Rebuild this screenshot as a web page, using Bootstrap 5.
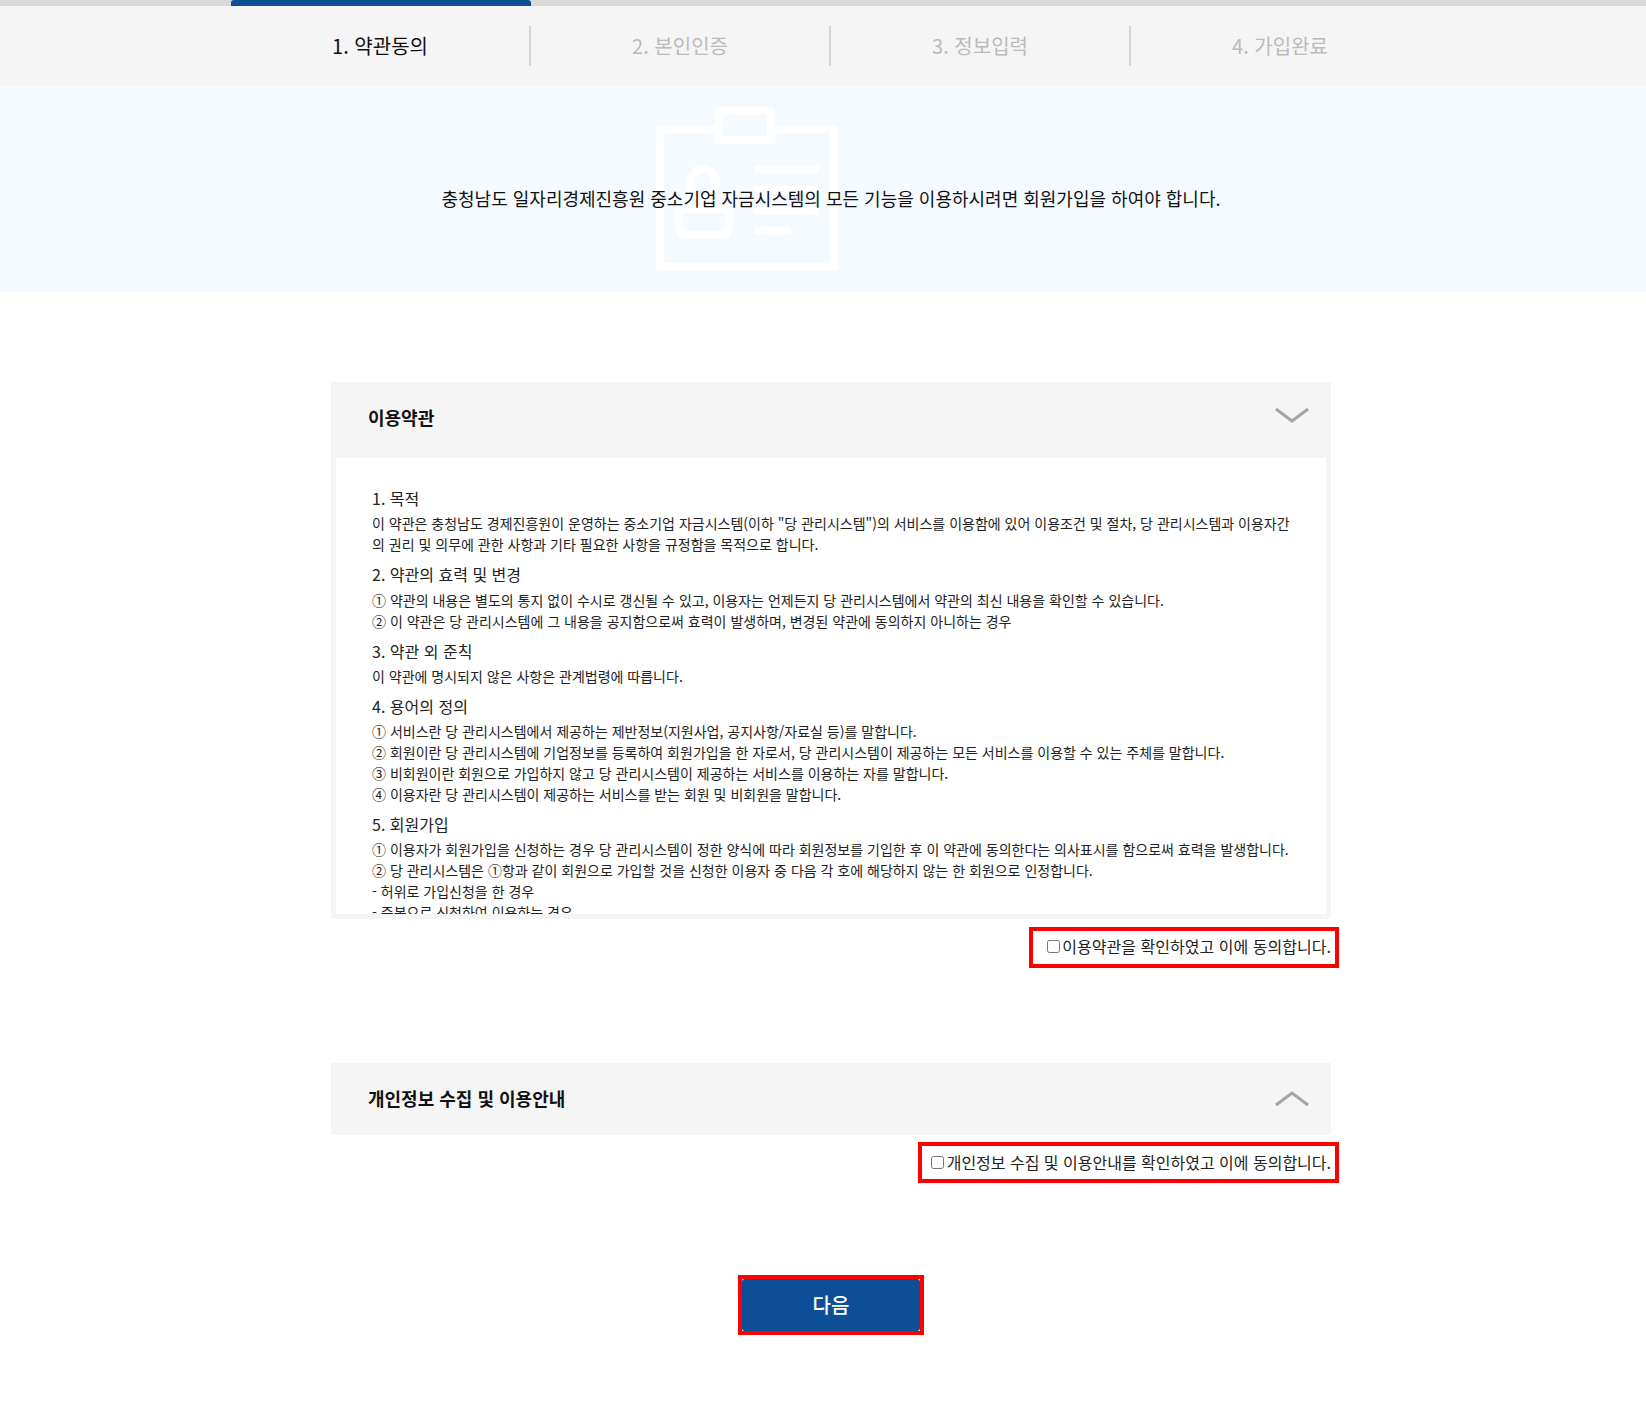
<!DOCTYPE html>
<html lang="ko">
<head>
<meta charset="utf-8">
<title>회원가입</title>
<link href="https://cdn.jsdelivr.net/npm/bootstrap@5.3.0/dist/css/bootstrap.min.css" rel="stylesheet">
<style>
html,body{overflow-x:hidden}
body{font-family:"Noto Sans CJK KR","Liberation Sans",sans-serif;color:#111;background:#fff;min-height:1422px}
.step-rail{height:86px;background:#f5f5f5;border-top:6px solid #d9d9d9;padding-left:12px;position:relative}
.step-fill{position:absolute;top:-6px;left:231px;width:300px;height:6px;background:#0d4f97;border-radius:3px 3px 0 0}
.step-list{width:1200px;height:100%;margin-left:auto;margin-right:auto;list-style:none;padding:20px 0;margin-top:0;margin-bottom:0}
.step-item{width:300px;height:40px;font-size:20px;line-height:40px;text-align:center;color:#bbb;border-left:2px solid #d5d5d5}
.step-item:first-child{border-left:0;color:#111;padding-left:2px}
.intro{height:206px;background:#f5faff;padding-left:16px;padding-top:19px;position:relative;font-size:18px}
.intro-art{position:absolute;left:650px;top:14px}
.intro-text{position:relative}
.agree-wrap{width:1000px;margin-left:calc(50% - 492px)}
.first-term{margin-top:90px}
.second-term{margin-top:95px}
.term-head{background:#f5f5f5;padding:0 22px 0 37px;font-weight:700;font-size:18px}
.term-h1{height:76px;padding-bottom:6px}
.term-h1 svg{margin-bottom:2px}
.term-h2{height:72px;padding-bottom:2px}
.term-frame{background:#f5f5f5;padding:0 5px 5px}
.term-body{background:#fff;height:456px;overflow:hidden;padding:29px 36px 0;font-size:14px;line-height:21px;color:#222;white-space:nowrap}
.term-body h6{font-size:16px;font-weight:400;line-height:22px;margin:0 0 4.3px}
.term-body p{margin:0 0 8px}
.agree-line{margin:8px -8px 0 0}
.agree-line-tight{margin-top:7px}
.agree-box{height:41px;border:4px solid #f00;padding:0 4px 4px 14px;font-size:16px;letter-spacing:.03px;color:#222}
.agree-box-wide{padding:0 4px 2px 9px;letter-spacing:-.01px}
.agree-box input{width:13px;height:13px;margin:2px 2px 0 0}
.agree-box-wide input{margin-right:3px}
.next-frame{width:186px;height:60px;margin-left:calc(50% - 93px);margin-top:92px;border:4px solid #f00;background:#fff}
.next-btn{width:100%;height:100%;background:#0d4f97;color:#fff;border:0;border-radius:3px;font-size:20px;font-weight:500;padding:0}
.next-btn:hover{background:#0d4f97;color:#fff}
</style>
</head>
<body>
<div class="step-rail">
  <div class="step-fill"></div>
  <ol class="step-list d-flex">
    <li class="step-item">1. 약관동의</li>
    <li class="step-item">2. 본인인증</li>
    <li class="step-item">3. 정보입력</li>
    <li class="step-item">4. 가입완료</li>
  </ol>
</div>
<div class="intro d-flex align-items-center justify-content-center">
  <svg class="intro-art" width="195" height="175" viewBox="0 0 195 175" fill="none" stroke="#fff" stroke-width="8" stroke-linejoin="round" aria-hidden="true">
    <path d="M68 29H10V167H184V29H121"/>
    <rect x="68.5" y="11" width="52.5" height="29"/>
    <ellipse cx="53" cy="84" rx="12.5" ry="15"/>
    <path d="M32 135L28 118Q26 109 36 109H72Q82 109 80 118L76 135Z"/>
    <path d="M108 69h57M108 90h57M108 111h57M108 131h29" stroke-linecap="round"/>
  </svg>
  <div class="intro-text">충청남도 일자리경제진흥원 중소기업 자금시스템의 모든 기능을 이용하시려면 회원가입을 하여야 합니다.</div>
</div>
<main class="agree-wrap">
  <section class="first-term">
    <div class="term-head term-h1 d-flex align-items-center justify-content-between">
      <span>이용약관</span>
      <svg width="34" height="18" viewBox="0 0 34 18" fill="none" stroke="#a5a5a5" stroke-width="3"><path d="M1 2l16 12L33 2"/></svg>
    </div>
    <div class="term-frame">
      <div class="term-body">
        <h6>1. 목적</h6>
        <p>이 약관은 충청남도 경제진흥원이 운영하는 중소기업 자금시스템(이하 "당 관리시스템")의 서비스를 이용함에 있어 이용조건 및 절차, 당 관리시스템과 이용자간<br>의 권리 및 의무에 관한 사항과 기타 필요한 사항을 규정함을 목적으로 합니다.</p>
        <h6>2. 약관의 효력 및 변경</h6>
        <p>① 약관의 내용은 별도의 통지 없이 수시로 갱신될 수 있고, 이용자는 언제든지 당 관리시스템에서 약관의 최신 내용을 확인할 수 있습니다.<br>② 이 약관은 당 관리시스템에 그 내용을 공지함으로써 효력이 발생하며, 변경된 약관에 동의하지 아니하는 경우</p>
        <h6>3. 약관 외 준칙</h6>
        <p>이 약관에 명시되지 않은 사항은 관계법령에 따릅니다.</p>
        <h6>4. 용어의 정의</h6>
        <p>① 서비스란 당 관리시스템에서 제공하는 제반정보(지원사업, 공지사항/자료실 등)를 말합니다.<br>② 회원이란 당 관리시스템에 기업정보를 등록하여 회원가입을 한 자로서, 당 관리시스템이 제공하는 모든 서비스를 이용할 수 있는 주체를 말합니다.<br>③ 비회원이란 회원으로 가입하지 않고 당 관리시스템이 제공하는 서비스를 이용하는 자를 말합니다.<br>④ 이용자란 당 관리시스템이 제공하는 서비스를 받는 회원 및 비회원을 말합니다.</p>
        <h6>5. 회원가입</h6>
        <p>① 이용자가 회원가입을 신청하는 경우 당 관리시스템이 정한 양식에 따라 회원정보를 기입한 후 이 약관에 동의한다는 의사표시를 함으로써 효력을 발생합니다.<br>② 당 관리시스템은 ①항과 같이 회원으로 가입할 것을 신청한 이용자 중 다음 각 호에 해당하지 않는 한 회원으로 인정합니다.<br>- 허위로 가입신청을 한 경우<br>- 중복으로 신청하여 이용하는 경우</p>
      </div>
    </div>
    <div class="agree-line d-flex justify-content-end">
      <label class="agree-box d-inline-flex align-items-center"><input type="checkbox">이용약관을 확인하였고 이에 동의합니다.</label>
    </div>
  </section>
  <section class="second-term">
    <div class="term-head term-h2 d-flex align-items-center justify-content-between">
      <span>개인정보 수집 및 이용안내</span>
      <svg width="34" height="18" viewBox="0 0 34 18" fill="none" stroke="#a5a5a5" stroke-width="3"><path d="M1 16L17 4l16 12"/></svg>
    </div>
    <div class="agree-line agree-line-tight d-flex justify-content-end">
      <label class="agree-box agree-box-wide d-inline-flex align-items-center"><input type="checkbox">개인정보 수집 및 이용안내를 확인하였고 이에 동의합니다.</label>
    </div>
  </section>
  <div class="next-frame"><button type="button" class="btn next-btn d-block">다음</button></div>
</main>
<script src="https://cdn.jsdelivr.net/npm/bootstrap@5.3.0/dist/js/bootstrap.bundle.min.js"></script>
</body>
</html>
